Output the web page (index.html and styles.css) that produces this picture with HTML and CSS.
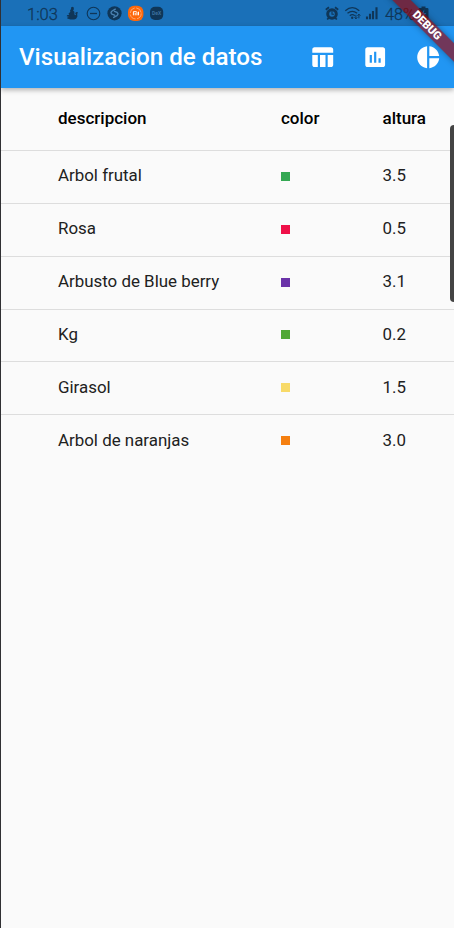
FILE: index.html
```html
<!DOCTYPE html>
<html lang="es">
<head>
<meta charset="utf-8">
<title>Visualizacion de datos</title>
<link rel="stylesheet" href="styles.css">
</head>
<body>
<div class="screen">
  <div class="status">
    <span class="clock">1:03</span>
    <svg class="left-icons" width="100" height="26" viewBox="65 0 100 26">
      <path fill="#0f3658" d="M71 7.500l1.500-.8 1.300.8v2l-.8 1 1.400 1.300v2.800l1 .7.700-.8-.9-.8.600-1.500 1.500-.2.700 1-.8.600.2 3-1.300 2.200-2 .8h-3.600l-3.300-1 .3-1.300 1.700-.3-2.400-.8.2-1 2.300-.5-.8-1.200 1.800-1.500-.2-2 1-.8z"/>
      <circle cx="93.500" cy="13.500" r="6.300" fill="none" stroke="#0f3658" stroke-width="1.100"/>
      <path d="M90 13.500h7" stroke="#0f3658" stroke-width="1.300"/>
      <circle cx="114.500" cy="13.300" r="7.100" fill="#0f3658"/>
      <path d="M115.300 9.200l-3.200 1.800q-2 1.600-.2 3.200l2.600 1M113.700 17.400l3.200-1.800q2-1.600.2-3.200l-2.600-1" fill="none" stroke="#4b83b3" stroke-width="1.400" stroke-linecap="round"/>
      <rect x="128" y="5.700" width="15.400" height="15.400" rx="6" fill="#ff6709"/>
      <circle cx="135.700" cy="13.400" r="5.500" fill="none" stroke="#ffb98c" stroke-width=".8" stroke-dasharray="7 1.600"/>
      <path d="M133.400 15.300v-3.600h2.700q.9 0 .9 1v2.600M135.200 13v2.300M138.500 11.700v3.600" fill="none" stroke="#fff" stroke-width="1"/>
      <rect x="150" y="6.700" width="13.200" height="13.200" rx="5" fill="#0f3658"/>
      <text x="156.600" y="15.300" class="dex">DeX</text>
    </svg>
    <svg class="right-icons" width="56" height="26" viewBox="324 0 56 26">
      <g fill="none" stroke="#0f3658">
        <circle cx="332" cy="14" r="4.300" stroke-width="3"/>
        <path d="M325.800 9.800l3.200-2.500M338.200 9.800L335 7.300M328.800 17.800l-1.600 1.700M335.200 17.800l1.600 1.700" stroke-width="1.800"/>
        <path d="M332 11.300v3h2" stroke-width="1.100"/>
        <path d="M345.300 10.700q7-6 14 0M347.500 13.300q4.800-4 9.600 0M349.800 15.700q2.500-2 5 0" stroke-width="1.300"/>
        <path d="M355.900 14.800v4M358.900 18.300v-4M354.500 17.300l1.400 1.600 1.400-1.600M357.500 15.700l1.400-1.600 1.400 1.600" stroke-width="1"/>
        <path d="M367 19.300v-2.800M370 19.300v-5.500M373 19.300v-8.300M376.500 19.300V7.300" stroke-width="2.100"/>
      </g>
      <circle cx="352.200" cy="17.800" r="1.200" fill="#0f3658"/>
    </svg>
    <span class="battery">48%</span>
    <svg class="battery-icon" width="12" height="26" viewBox="0 0 12 26"><path d="M3.500 8V6.500h4V8h1.700q1.300 0 1.300 1.300v9q0 1.400-1.300 1.400H1.800Q.5 19.700.5 18.300v-9Q.5 8 1.800 8z" fill="#0f3658"/><path d="M6.300 9.500l-3.500 5h2.300l-.5 3.700 3.700-5.200H6z" fill="#1a70b8"/></svg>
  </div>
  <header class="appbar">
    <h1>Visualizacion de datos</h1>
    <svg class="action" viewBox="0 0 24 24"><path d="M10 10.020h5V21h-5zM17 21h3c1.100 0 2-.9 2-2v-9h-5v11zm3-18H5c-1.100 0-2 .9-2 2v3h19V5c0-1.100-.9-2-2-2zM3 19c0 1.100.9 2 2 2h3V10H3v9z"/></svg>
    <svg class="action" viewBox="0 0 24 24"><path d="M19 3H5c-1.100 0-2 .9-2 2v14c0 1.100.9 2 2 2h14c1.100 0 2-.9 2-2V5c0-1.100-.9-2-2-2zM9 17H7v-7h2v7zm4 0h-2V7h2v10zm4 0h-2v-4h2v4z"/></svg>
    <svg class="action" viewBox="0 0 24 24"><path d="M11 2v20c-5.070-.5-9-4.790-9-10s3.930-9.500 9-10zm2.030 0v8.990H22c-.47-4.740-4.240-8.520-8.970-8.990zm0 11.010V22c4.740-.47 8.500-4.250 8.970-8.990h-8.970z"/></svg>
  </header>
  <main class="table">
    <div class="row head"><span>descripcion</span><span>color</span><span>altura</span></div>
    <div class="row"><span>Arbol frutal</span><i class="green"></i><span>3.5</span></div>
    <div class="row"><span>Rosa</span><i class="red"></i><span>0.5</span></div>
    <div class="row"><span>Arbusto de Blue berry</span><i class="purple"></i><span>3.1</span></div>
    <div class="row"><span>Kg</span><i class="leaf"></i><span>0.2</span></div>
    <div class="row"><span>Girasol</span><i class="yellow"></i><span>1.5</span></div>
    <div class="row"><span>Arbol de naranjas</span><i class="orange"></i><span>3.0</span></div>
  </main>
  <div class="handle"></div>
  <div class="debug">DEBUG</div>
</div>
</body>
</html>
```
FILE: styles.css
```css
*{box-sizing:border-box}
body{margin:0;font-family:Roboto,sans-serif;background:#fafafa}
.screen{position:relative;height:928px;overflow:hidden;border-left:1px solid #303033}
.status{height:26px;background:#1a70b8;display:flex;align-items:center;padding-left:26px;color:#0f3658;font-size:16.5px;line-height:26px}
.status svg{flex:none}
.clock{width:38px;padding-top:3px;font-weight:300;-webkit-text-stroke:.3px #0f3658}
.left-icons{margin-right:159px}
.battery{width:33px;padding:3px 0 0 5px;font-weight:300;font-size:16.2px;white-space:nowrap;-webkit-text-stroke:.3px #0f3658}
.battery-icon{margin-left:5px}
.dex{font-size:5px;font-weight:700;fill:#3d719e;text-anchor:middle}
.appbar{position:relative;height:62px;background:#2196f3;display:flex;align-items:center;padding-left:18px;box-shadow:0 2px 5px rgba(0,0,0,.3);gap:26.4px}
h1{margin:0;font-size:24.2px;font-weight:500;color:#fff;width:263.6px;white-space:nowrap}
.action{width:26.4px;height:26.4px;fill:#fff;flex:none}
.row{height:52.85px;display:grid;grid-template-columns:223px 101.500px 70px;align-items:center;padding:0 0 2px 57px;font-size:16.9px;color:#212121;border-top:1px solid #ddd}
.row:nth-child(-n+4) span{margin-top:-1px}
.row:nth-child(-n+4) i{margin-top:1px}
.head{height:62px;border:0;font-weight:500;font-size:17px;color:#000;padding-bottom:1px}
.row i{width:9px;height:9px}
.green{background:#34a853}.red{background:#ef1048}.purple{background:#6a32a8}.leaf{background:#50a835}.yellow{background:#f8da68}.orange{background:#f57f10}
.handle{position:absolute;right:0;top:125px;width:4px;height:177px;background:#444;border-radius:4px 0 0 4px}
.debug{position:absolute;left:376.300px;top:19.200px;width:100px;height:13.200px;transform:rotate(45deg);background:rgba(160,0,0,.63);box-shadow:0 0 6px rgba(0,0,0,.35);color:#fff;font-size:11.2px;line-height:13.200px;font-weight:900;text-align:center}
```
